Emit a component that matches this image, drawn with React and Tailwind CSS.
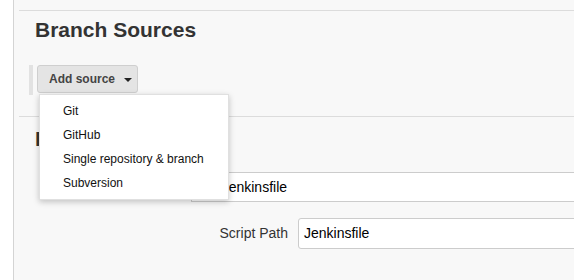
import React from "react";

export default function App() {
  const items = ["Git", "GitHub", "Single repository & branch", "Subversion"];
  return (
    <div className="w-[574px] h-[280px] flex bg-white overflow-hidden font-['Liberation_Sans',Arial,sans-serif]">
      <div className="w-[14px] shrink-0 bg-white border-r border-[#d4d4d4]" />
      <div className="flex-1 min-w-0 bg-[#f8f8f8] overflow-hidden">
        <div className="h-[10px]" />
        <div className="ml-[5px] border-t border-[#dcdcdc]" />
        <h2 className="mt-[7px] ml-[21px] text-[21px] leading-[24px] font-bold text-[#333]">
          Branch Sources
        </h2>
        <div className="mt-[23px] ml-[15px] flex items-start">
          <div className="w-[4px] h-[30px] bg-[#e2e2e2]" />
          <div className="relative ml-[4px]">
            <button className="h-[28px] w-[101px] flex items-center pl-[11px] bg-[#e4e4e4] border border-[#cfcfcf] rounded-[3px] text-[12px] font-bold text-[#444]">
              <span>Add source</span>
              <span className="ml-[9px] mt-[1px] w-0 h-0 border-x-[4px] border-t-[4px] border-x-transparent border-t-[#222]" />
            </button>
            <div className="absolute z-10 left-[2px] top-[29px] w-[190px] py-[4px] bg-white border border-[#e0e0e0] shadow-[0_2px_6px_rgba(0,0,0,0.22)]">
              {items.map((t) => (
                <div key={t} className="h-[24px] flex items-center pl-[23px] text-[12px] text-[#111] whitespace-nowrap">
                  {t}
                </div>
              ))}
            </div>
          </div>
        </div>
        <div className="mt-[21px] ml-[5px] border-t border-[#dcdcdc]" />
        <h2 className="mt-[10px] ml-[21px] text-[21px] leading-[24px] font-bold text-[#333] whitespace-nowrap">
          Build
        </h2>
        <div className="mt-[21px] flex items-center">
          <div className="w-[177px] shrink-0" />
          <div className="w-[400px] shrink-0 h-[30px] flex items-center pl-[11px] bg-white border border-[#cccccc] text-[14px] text-black whitespace-nowrap">
            by Jenkinsfile
          </div>
        </div>
        <div className="mt-[16px] flex items-center">
          <div className="w-[274px] shrink-0 text-right text-[14px] text-[#333]">Script Path</div>
          <div className="ml-[10px] w-[400px] shrink-0 h-[31px] flex items-center pl-[5px] bg-white border border-[#cccccc] rounded-[3px] text-[14px] text-black whitespace-nowrap">
            Jenkinsfile
          </div>
        </div>
      </div>
    </div>
  );
}
